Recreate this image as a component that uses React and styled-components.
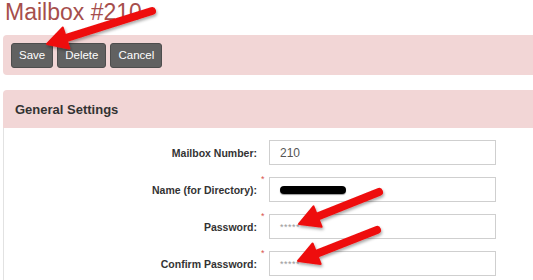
import React from "react";
import styled, { createGlobalStyle } from "styled-components";

const GlobalStyle = createGlobalStyle`
  html, body {
    margin: 0;
    padding: 0;
    background: #fff;
    overflow: hidden;
  }
  body {
    font-family: "Liberation Sans", Arial, sans-serif;
  }
`;

const fields = [
  { label: "Mailbox Number:", required: false, kind: "text", value: "210" },
  { label: "Name (for Directory):", required: true, kind: "redacted" },
  { label: "Password:", required: true, kind: "secret" },
  { label: "Confirm Password:", required: true, kind: "secret" },
];

const arrows = [
  { from: [152, 11], to: [47, 44] },
  { from: [379, 192], to: [299, 224] },
  { from: [377, 230], to: [298, 261] },
];

// arrow head + shaft computed from tail/tip points
const Arrow = ({ from, to }) => {
  const dx = to[0] - from[0];
  const dy = to[1] - from[1];
  const len = Math.hypot(dx, dy);
  const ux = dx / len;
  const uy = dy / len;
  const nx = -uy;
  const ny = ux;
  const head = 20;
  const half = 11;
  const bx = to[0] - ux * head;
  const by = to[1] - uy * head;
  const pts = [
    [to[0], to[1]],
    [bx + nx * half, by + ny * half],
    [bx - nx * half, by - ny * half],
  ]
    .map((p) => p.join(","))
    .join(" ");
  return (
    <g filter="url(#arrowShadow)">
      <line
        x1={from[0]}
        y1={from[1]}
        x2={bx + ux * 2}
        y2={by + uy * 2}
        stroke="#ee1111"
        strokeWidth="8"
        strokeLinecap="round"
      />
      <polygon points={pts} fill="#ee1111" strokeLinejoin="round" stroke="#ee1111" strokeWidth="2" />
    </g>
  );
};

const App = () => {
  return (
    <>
      <GlobalStyle />
      <Page>
        <Title>Mailbox #210</Title>
        <Toolbar>
          <Button>Save</Button>
          <Button>Delete</Button>
          <Button>Cancel</Button>
        </Toolbar>
        <Panel>
          <PanelHeader>General Settings</PanelHeader>
          <PanelBody>
            {fields.map((f) => (
              <Row key={f.label}>
                <Label>{f.label}</Label>
                <Star>{f.required ? "*" : ""}</Star>
                <Field>
                  {f.kind === "text" && f.value}
                  {f.kind === "redacted" && <Redaction />}
                  {f.kind === "secret" && <Secret>*****</Secret>}
                </Field>
              </Row>
            ))}
          </PanelBody>
        </Panel>
        <Overlay width="533" height="280" viewBox="0 0 533 280">
          <defs>
            <filter id="arrowShadow" x="-20%" y="-40%" width="140%" height="180%">
              <feDropShadow dx="1" dy="2" stdDeviation="1.5" floodColor="#000" floodOpacity="0.35" />
            </filter>
          </defs>
          {arrows.map((a, i) => (
            <Arrow key={i} from={a.from} to={a.to} />
          ))}
        </Overlay>
      </Page>
    </>
  );
};

export default App;

// ---------------- Styled Components ----------------
const Page = styled.div`
  position: relative;
  width: 580px;
  height: 280px;
  padding-left: 3px;
  box-sizing: border-box;
  overflow: hidden;
`;

const Title = styled.h1`
  margin: 0 0 0 2px;
  font-size: 23px;
  line-height: 24px;
  font-weight: 400;
  color: #a64e4c;
`;

const Toolbar = styled.div`
  margin-top: 11px;
  height: 40px;
  box-sizing: border-box;
  background: #f2d6d6;
  border-radius: 4px 0 0 4px;
  display: flex;
  align-items: center;
  gap: 4px;
  padding: 0 8px;
`;

const Button = styled.div`
  height: 25px;
  box-sizing: border-box;
  padding: 0 7px;
  display: flex;
  align-items: center;
  background: #616161;
  border: 1px solid #4d4d4d;
  border-radius: 3px;
  color: #fff;
  font-size: 11.5px;
`;

const Panel = styled.div`
  margin-top: 15px;
`;

const PanelHeader = styled.div`
  height: 38px;
  box-sizing: border-box;
  background: #f2d6d6;
  border-radius: 4px 0 0 0;
  display: flex;
  align-items: center;
  padding-left: 12px;
  font-size: 13px;
  font-weight: 700;
  color: #333;
`;

const PanelBody = styled.div`
  border-left: 1px solid #e2e2e2;
  padding-top: 12px;
  display: flex;
  flex-direction: column;
  gap: 12px;
  height: 200px;
`;

const Row = styled.div`
  display: grid;
  grid-template-columns: 253px 12px 227px;
  height: 25px;
  align-items: center;
`;

const Label = styled.div`
  text-align: right;
  font-size: 10.5px;
  font-weight: 700;
  color: #333;
`;

const Star = styled.div`
  align-self: start;
  margin-top: -3px;
  padding-left: 4px;
  font-size: 9px;
  color: #d9534f;
`;

const Field = styled.div`
  height: 25px;
  box-sizing: border-box;
  border: 1px solid #cfcfcf;
  display: flex;
  align-items: center;
  padding-left: 10px;
  font-size: 12px;
  color: #555;
`;

const Redaction = styled.span`
  display: block;
  width: 66px;
  height: 8px;
  border-radius: 4px;
  background: #000;
  box-shadow: 0 1px 1px rgba(0, 0, 0, 0.4);
`;

const Secret = styled.span`
  font-size: 9px;
  color: #999;
  letter-spacing: 0.5px;
`;

const Overlay = styled.svg`
  position: absolute;
  left: 0;
  top: 0;
  pointer-events: none;
`;
